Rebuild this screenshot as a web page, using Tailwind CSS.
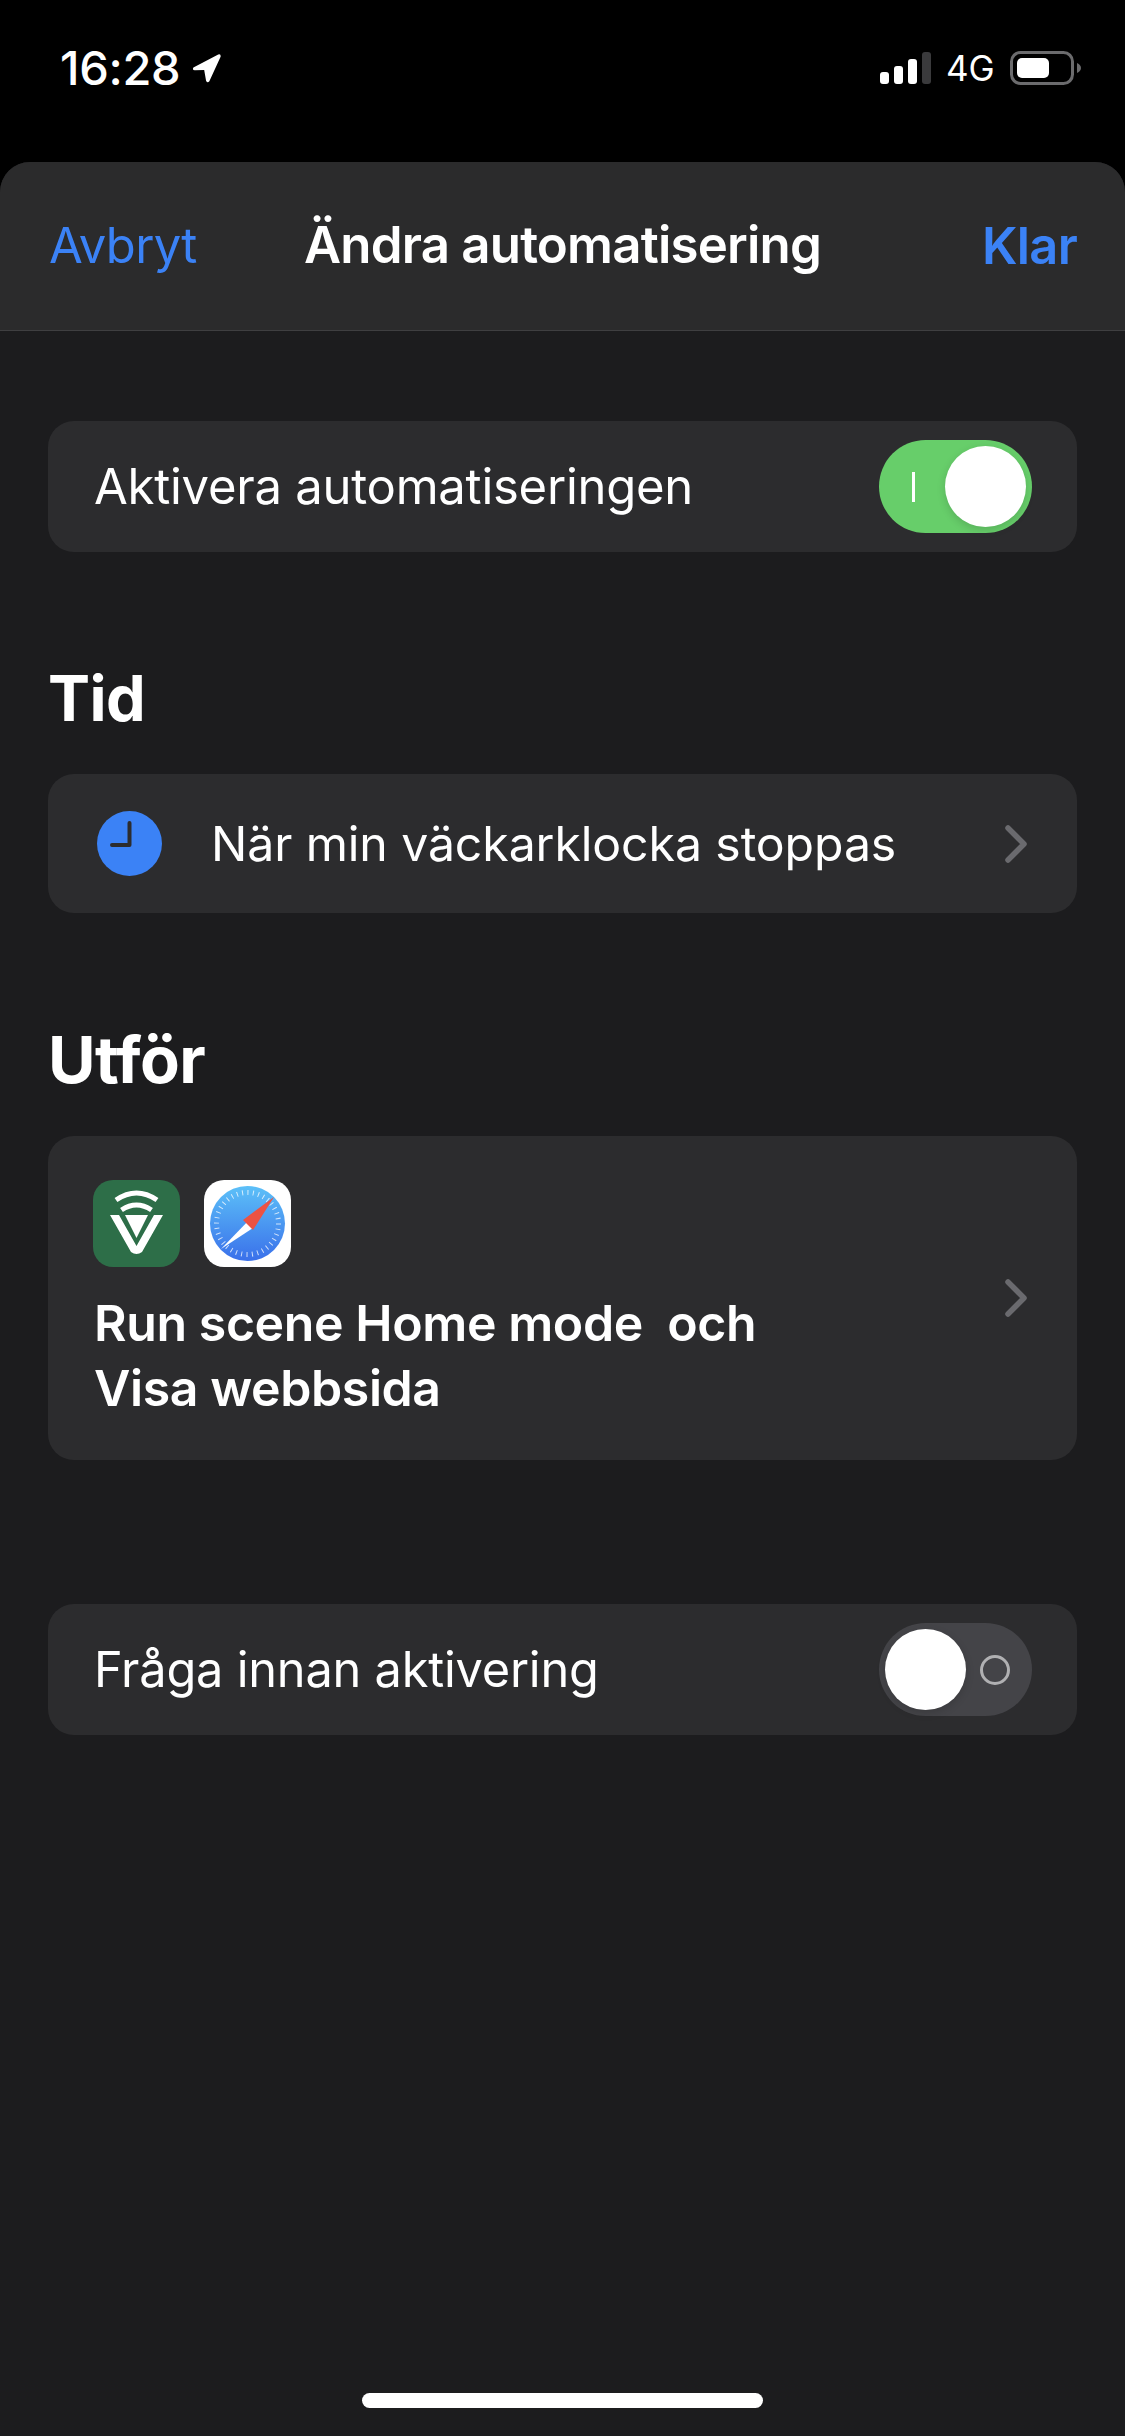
<!doctype html>
<html lang="sv">
<head>
<meta charset="utf-8">
<script src="https://cdn.jsdelivr.net/npm/@tailwindcss/browser@4"></script>
</head>
<body class="m-0 bg-black">
<div class="w-[1125px] h-[2436px] bg-black overflow-hidden flex flex-col font-['Inter','Liberation_Sans',sans-serif] text-white">
  <!-- status bar -->
  <div class="h-[162px] shrink-0 flex items-start justify-between pl-[60px] pr-[43px] pt-[48px]">
    <div class="flex items-center gap-[12px] h-[40px]">
      <span class="text-[47px] leading-[40px] font-medium tracking-[-0.3px]">16:28</span>
      <svg class="w-[30px] h-[30px]" viewBox="0 0 32 32"><path d="M1.5 15.5 L28 1.5 Q31 0.5 30.5 4 L18.5 30 Q16.5 32.5 15 29.5 L13 18 L3 18.5 Q0 18 1.5 15.5Z" fill="#fff"/></svg>
    </div>
    <div class="flex items-center h-[40px]">
      <svg class="w-[52px] h-[32px]" viewBox="0 0 52 32"><rect x="0" y="20" width="9" height="12" rx="3" fill="#fff"/><rect x="14" y="14" width="9" height="18" rx="3" fill="#fff"/><rect x="28" y="7" width="9" height="25" rx="3" fill="#fff"/><rect x="42" y="0" width="9" height="32" rx="3" fill="#3a3a3c"/></svg>
      <span class="text-[35px] leading-[40px] ml-[14px] w-[50px]">4G</span>
      <svg class="w-[72px] h-[34px] ml-[14px]" viewBox="0 0 72 34"><rect x="1.5" y="1.5" width="61" height="31" rx="9" fill="none" stroke="#6b6b6d" stroke-width="3"/><rect x="7" y="7" width="32" height="20" rx="5" fill="#fff"/><path d="M67 12 Q71 14 71 17 Q71 20 67 22Z" fill="#6b6b6d"/></svg>
    </div>
  </div>

  <!-- sheet -->
  <div class="flex-1 bg-[#1c1c1e] rounded-t-[30px] overflow-hidden flex flex-col relative">
    <div class="h-[169px] shrink-0 bg-[#2b2b2c] border-b border-[#3f3f41] relative flex items-center justify-between pl-[49px] pr-[48px]">
      <span class="text-[#3b82f6] text-[49px] font-normal tracking-[-0.7px]">Avbryt</span>
      <span class="absolute left-[304px] top-[53px] text-[51px] leading-[60px] font-semibold tracking-[-0.8px]">Ändra automatisering</span>
      <span class="text-[#3b82f6] text-[50.5px] font-semibold tracking-[-0.7px]">Klar</span>
    </div>

    <div class="flex flex-col px-[48px] pt-[90px]">
      <!-- enable -->
      <div class="h-[131px] bg-[#2c2c2e] rounded-[26px] flex items-center justify-between pl-[46px] pr-[45px]">
        <span class="text-[49px] tracking-[-0.25px]">Aktivera automatiseringen</span>
        <div class="w-[153px] h-[93px] rounded-full bg-[#67ce6a] relative flex items-center shrink-0">
          <span class="ml-[33px] w-[3px] h-[30px] bg-white"></span>
          <span class="absolute right-[6px] top-[6px] w-[81px] h-[81px] rounded-full bg-white shadow-[0_3px_8px_rgba(0,0,0,0.15)]"></span>
        </div>
      </div>

      <h2 class="mt-[109px] text-[63px] leading-[74px] font-bold tracking-[-0.6px]">Tid</h2>

      <!-- time -->
      <div class="mt-[39px] h-[139px] bg-[#2c2c2e] rounded-[26px] flex items-center pl-[49px] pr-[49px]">
        <svg class="w-[65px] h-[65px] shrink-0" viewBox="0 0 65 65"><circle cx="32.5" cy="32.5" r="32.5" fill="#3b82f6"/><path d="M32.5 12 V34 H15" fill="none" stroke="#2c2c2e" stroke-width="4" stroke-linecap="round" stroke-linejoin="round"/></svg>
        <span class="ml-[49px] pt-[2px] text-[48.2px] tracking-[-0.1px] flex-1">När min väckarklocka stoppas</span>
        <svg class="w-[24px] h-[38px] shrink-0" viewBox="0 0 24 38"><path d="M4 3 L20 19 L4 35" fill="none" stroke="#6a6a6e" stroke-width="5.5" stroke-linecap="round" stroke-linejoin="round"/></svg>
      </div>

      <h2 class="mt-[110px] text-[65px] leading-[74px] font-bold tracking-[-0.6px] [font-feature-settings:'calt'_0,'liga'_0]">Utför</h2>

      <!-- actions -->
      <div class="mt-[39px] h-[324px] bg-[#2c2c2e] rounded-[26px] flex items-center pl-[46px] pr-[49px]">
        <div class="flex-1 flex flex-col pt-[4px]">
          <div class="flex gap-[24px] ml-[-1px]">
            <svg class="w-[87px] h-[87px] rounded-[20px]" viewBox="0 0 87 87">
              <rect width="87" height="87" fill="#2d6e48"/>
              <path d="M23 20 Q43.5 6 64 20" fill="none" stroke="#fff" stroke-width="5"/>
              <path d="M28.5 30 Q43.5 20 58.5 30" fill="none" stroke="#fff" stroke-width="5"/>
              <path d="M17 35 H26 L43.5 66 L61 35 H70 L49 72 Q43.5 76 38 72 Z" fill="#fff"/>
              <path d="M32 35 H55 L43.5 58 Z" fill="#fff"/>
            </svg>
            <svg class="w-[87px] h-[87px] rounded-[20px]" viewBox="0 0 87 87">
              <defs><linearGradient id="sf" x1="0" y1="0" x2="0" y2="1"><stop offset="0" stop-color="#5cc0f8"/><stop offset="1" stop-color="#3a70ea"/></linearGradient></defs>
              <rect width="87" height="87" fill="#fff"/>
              <circle cx="43.5" cy="43.5" r="37.5" fill="url(#sf)"/>
              <circle cx="43.5" cy="43.5" r="31" fill="none" stroke="#fff" stroke-opacity="0.75" stroke-width="5" stroke-dasharray="1 4.4"/>
              <path d="M17 69 L47 38 L49 48 Z" fill="#fff"/>
              <path d="M70 17 L39 40 L49 50 Z" fill="#ec5243"/>
            </svg>
          </div>
          <div class="mt-[24px] text-[50px] leading-[65px] font-semibold tracking-[-0.4px]">Run scene Home mode&nbsp; och<br>Visa webbsida</div>
        </div>
        <svg class="w-[24px] h-[38px] shrink-0" viewBox="0 0 24 38"><path d="M4 3 L20 19 L4 35" fill="none" stroke="#6a6a6e" stroke-width="5.5" stroke-linecap="round" stroke-linejoin="round"/></svg>
      </div>

      <!-- ask -->
      <div class="mt-[144px] h-[131px] bg-[#2c2c2e] rounded-[26px] flex items-center justify-between pl-[46px] pr-[45px]">
        <span class="text-[48.7px] tracking-[-0.2px]">Fråga innan aktivering</span>
        <div class="w-[153px] h-[93px] rounded-full bg-[#444448] relative flex items-center justify-end shrink-0">
          <span class="mr-[22px] w-[30px] h-[30px] rounded-full border-[3px] border-[#b0b0b2]"></span>
          <span class="absolute left-[6px] top-[6px] w-[81px] h-[81px] rounded-full bg-white shadow-[0_3px_8px_rgba(0,0,0,0.15)]"></span>
        </div>
      </div>
    </div>

    <div class="absolute left-[362px] bottom-[28px] w-[401px] h-[15px] rounded-full bg-white"></div>
  </div>
</div>
</body>
</html>
